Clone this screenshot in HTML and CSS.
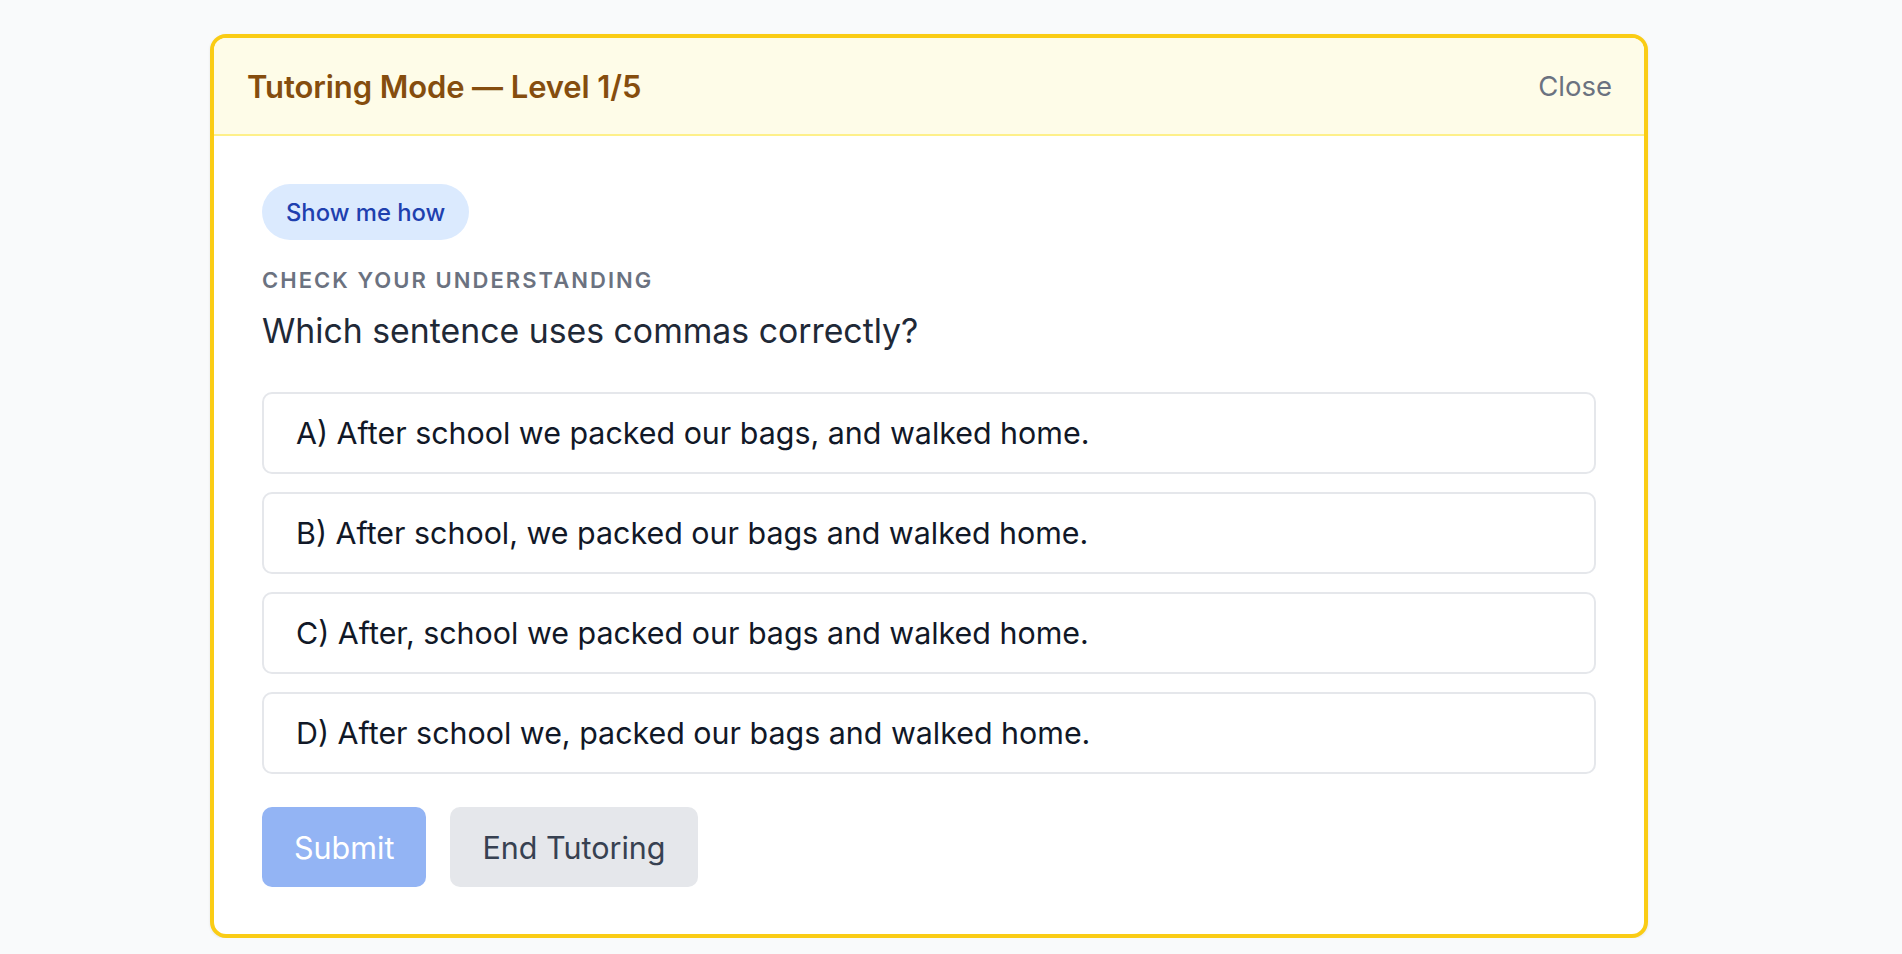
FILE: index.html
```html
<!DOCTYPE html>
<html lang="en">
<head>
<meta charset="utf-8">
<title>Tutoring Mode</title>
<link rel="stylesheet" href="styles.css">
</head>
<body>
<div class="page">
  <section class="card">
    <header class="card-header">
      <h2 class="title">Tutoring Mode — Level 1/5</h2>
      <button class="close">Close</button>
    </header>
    <div class="card-body">
      <button class="pill">Show me how</button>
      <div class="label">CHECK YOUR UNDERSTANDING</div>
      <div class="question">Which sentence uses commas correctly?</div>
      <div class="options">
        <button class="option">A) After school we packed our bags, and walked home.</button>
        <button class="option">B) After school, we packed our bags and walked home.</button>
        <button class="option">C) After, school we packed our bags and walked home.</button>
        <button class="option">D) After school we, packed our bags and walked home.</button>
      </div>
      <div class="actions">
        <button class="btn btn-submit">Submit</button>
        <button class="btn btn-end">End Tutoring</button>
      </div>
    </div>
  </section>
</div>
</body>
</html>
```

FILE: styles.css
```css
* { box-sizing: border-box; }
html, body { margin: 0; padding: 0; }
body {
  background: #f9fafb;
  font-family: Inter, "Noto Sans", "Liberation Sans", sans-serif;
  color: #1f2937;
}
button { font-family: inherit; cursor: pointer; }
.page {
  padding: 34px 0 0 210px;
}
.card {
  width: 1438px;
  background: #ffffff;
  border: 4px solid #facc15;
  border-radius: 16px;
  overflow: hidden;
  box-shadow: 0 1px 3px rgba(0,0,0,0.08);
}
.card-header {
  height: 98px;
  background: #fefce8;
  border-bottom: 2px solid #fef08a;
  display: flex;
  align-items: center;
  justify-content: space-between;
  padding: 0 32px 0 33px;
}
.title {
  margin: 0;
  font-size: 31px;
  font-weight: 600;
  color: #854d0e;
  letter-spacing: -0.1px;
}
.close {
  background: none;
  border: 0;
  padding: 0;
  font-size: 27.5px;
  color: #6b7280;
}
.card-body {
  padding: 48px 48px 47px 48px;
  display: flex;
  flex-direction: column;
  align-items: flex-start;
}
.pill {
  height: 56px;
  padding: 0 24px;
  border: 0;
  border-radius: 28px;
  background: #dbeafe;
  color: #1e40af;
  font-size: 23.8px;
  font-weight: 500;
}
.label {
  margin-top: 25px;
  font-size: 22px;
  line-height: 30px;
  font-weight: 600;
  letter-spacing: 2.05px;
  color: #6b7280;
}
.question {
  margin-top: 14px;
  font-size: 33.8px;
  line-height: 44px;
  color: #1f2937;
}
.options {
  margin-top: 39px;
  width: 100%;
  display: flex;
  flex-direction: column;
  gap: 18px;
}
.option {
  height: 82px;
  width: 100%;
  text-align: left;
  padding: 0 32px;
  background: #ffffff;
  border: 2px solid #e5e7eb;
  border-radius: 10px;
  font-size: 30.4px;
  color: #111827;
}
.actions {
  margin-top: 33px;
  display: flex;
  gap: 24px;
}
.btn {
  height: 80px;
  padding: 0 32px;
  border: 0;
  border-radius: 10px;
  font-size: 30.5px;
}
.btn-submit {
  background: #93b4f4;
  color: #ffffff;
}
.btn-end {
  background: #e5e7eb;
  color: #374151;
}
```
